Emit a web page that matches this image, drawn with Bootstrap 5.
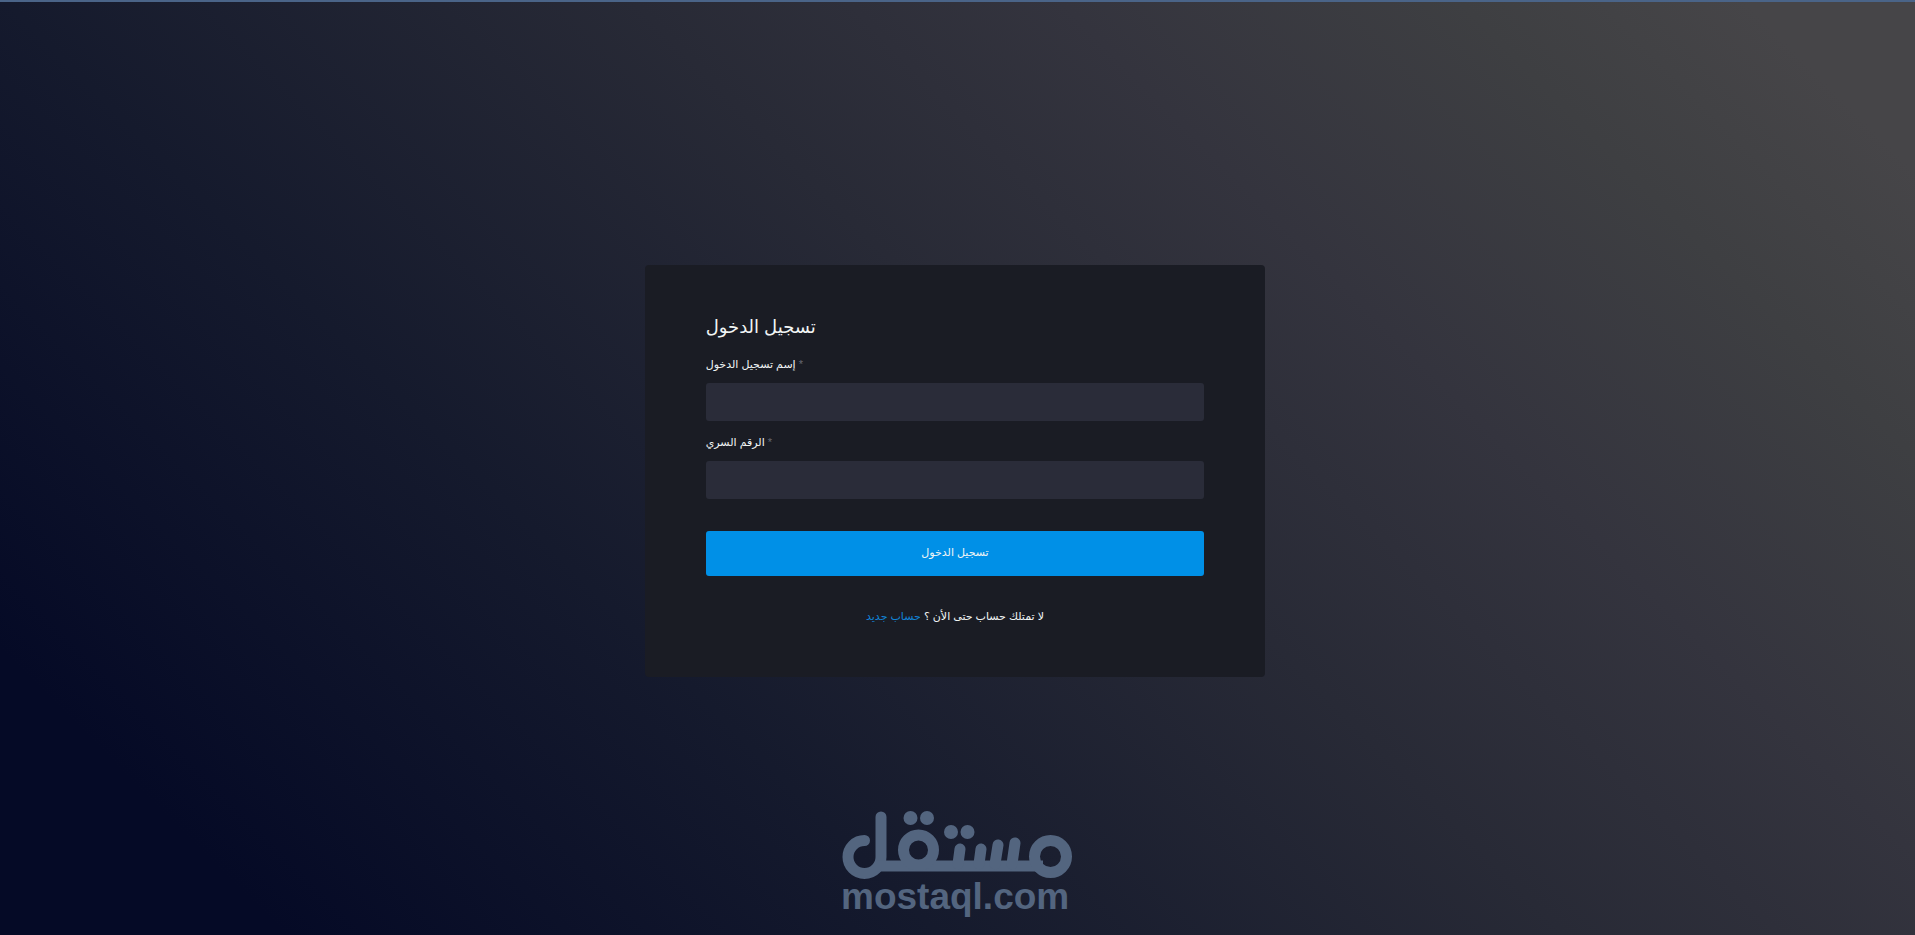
<!DOCTYPE html>
<html lang="ar">
<head>
<meta charset="utf-8">
<meta name="viewport" content="width=device-width, initial-scale=1">
<title>تسجيل الدخول</title>
<link rel="stylesheet" href="https://cdn.jsdelivr.net/npm/bootstrap@5.3.0/dist/css/bootstrap.min.css">
<style>
  body {
    background: linear-gradient(45deg, #050a26 10%, #151a2d 33%, #282a36 55%, #34343e 70%, #3e3f42 84%, #464548 94%) fixed;
    border-top: 2px solid #4a6488;
    color: #f1f5f5;
    font-family: "Liberation Sans", "DejaVu Sans", sans-serif;
    font-size: 11px;
    line-height: 18px;
  }
  .login-row { --bs-gutter-x: 12px; padding-right: 5px; }
  .login-card {
    background: #1a1c24;
    border-radius: 4px;
    margin-top: 263px;
    padding: 48px 61px 52px;
  }
  .login-title { font-size: 18px; line-height: 28px; margin-bottom: 14px; }
  .login-label { line-height: 18px; margin-bottom: 10px; }
  .star { color: #666973; }
  .login-input, .login-input:focus {
    background: #2a2c39;
    border: 0;
    border-radius: 3px;
    color: #f1f5f5;
    height: 38px;
  }
  .field { margin-bottom: 12px; }
  .login-btn, .login-btn:hover {
    background: #0090e7;
    border: 0;
    border-radius: 3px;
    color: #f1f5f5;
    font-size: 11px;
    height: 45px;
    line-height: 18px;
    margin: 20px 0 31px;
    padding: 0 0 4px;
  }
  .signup a { color: #1283d6; text-decoration: none; }
  .brand { margin-top: 134px; }
  .brand text { font: bold 37px "Liberation Sans", Arial, sans-serif; }
</style>
</head>
<body class="min-vh-100 overflow-hidden">
<main class="container-fluid">
  <div class="row login-row justify-content-center">
    <div class="col-12 col-md-6 col-lg-4">
      <div class="login-card">
        <h1 class="login-title fw-normal">تسجيل الدخول</h1>
        <form>
          <div class="field">
            <label class="login-label d-block" for="user">إسم تسجيل الدخول <span class="star">*</span></label>
            <input class="form-control login-input" id="user" type="text">
          </div>
          <div class="field">
            <label class="login-label d-block" for="pass">الرقم السري <span class="star">*</span></label>
            <input class="form-control login-input" id="pass" type="password">
          </div>
          <button class="btn login-btn w-100" type="submit">تسجيل الدخول</button>
          <p class="signup text-center mb-0" dir="rtl">لا تمتلك حساب حتى الأن ؟ <a href="#">حساب جديد</a></p>
        </form>
      </div>
    </div>
  </div>
</main>
<footer class="brand d-flex justify-content-center">
  <svg width="250" height="112" viewBox="-10 0 250 112" role="img" aria-label="مستقل">
    <g fill="none" stroke="#53657f" stroke-width="11" stroke-linecap="round">
      <path d="M21.500 29.500A16.500 16.500 0 1 0 38 46V6"/>
      <path d="M34 55H200" stroke-linecap="butt"/>
      <circle cx="75.500" cy="39" r="15"/>
      <circle cx="207.500" cy="45.500" r="16"/>
      <path d="M115 53L117 38M136 53L138 38M152 53L155 34M169 53L172 32"/>
    </g>
    <g fill="#53657f">
      <circle cx="67.500" cy="7" r="7"/><circle cx="84" cy="7" r="7"/>
      <circle cx="108" cy="21" r="7"/><circle cx="124.500" cy="21" r="7"/>
      <text x="-2" y="98">mostaql.com</text>
    </g>
  </svg>
</footer>
<script src="https://cdn.jsdelivr.net/npm/bootstrap@5.3.0/dist/js/bootstrap.bundle.min.js"></script>
</body>
</html>
